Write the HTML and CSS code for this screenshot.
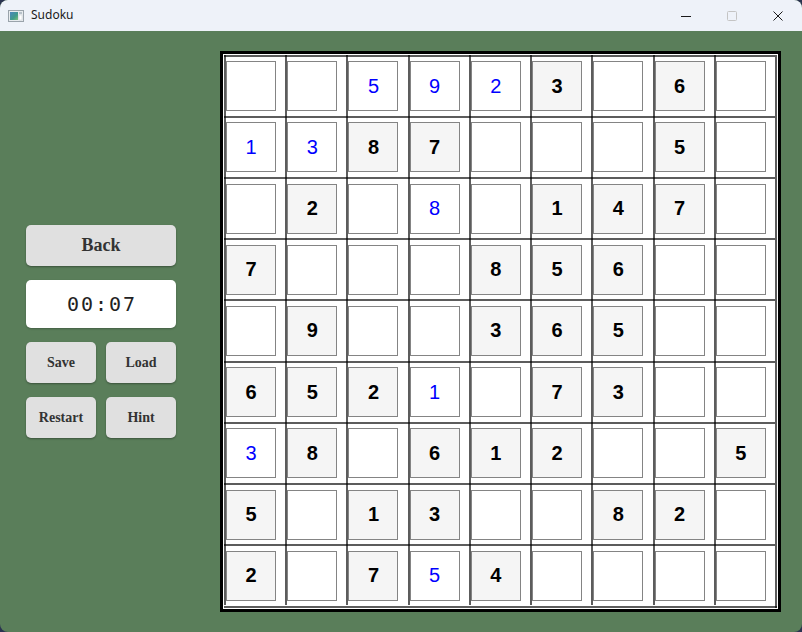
FILE: index.html
```html
<!DOCTYPE html>
<html lang="en">
<head>
<meta charset="utf-8">
<title>Sudoku</title>
<link rel="stylesheet" href="styles.css">
</head>
<body>
<div class="window">
  <div class="titlebar">
    <svg class="app-icon" width="16" height="14" viewBox="0 0 16 14">
      <defs>
        <linearGradient id="ig" x1="0" y1="0" x2="1" y2="1">
          <stop offset="0" stop-color="#4a86c0"/>
          <stop offset="0.6" stop-color="#3f9a8a"/>
          <stop offset="1" stop-color="#7cc07a"/>
        </linearGradient>
      </defs>
      <rect x="0.5" y="1.5" width="15" height="11" fill="#e8ecef" stroke="#9aa3ab"/>
      <rect x="2" y="3" width="8" height="8" fill="url(#ig)"/>
      <rect x="11" y="3" width="3" height="2" fill="#b8c2ca"/>
      <rect x="11" y="6" width="3" height="5" fill="#ffffff" stroke="#c5ccd2" stroke-width="0.5"/>
    </svg>
    <span class="title">Sudoku</span>
    <div class="controls">
      <span class="ctl">
        <svg width="10" height="10" viewBox="0 0 10 10"><path d="M0 5.5H10" stroke="#1a1a1a" stroke-width="1"/></svg>
      </span>
      <span class="ctl">
        <svg width="10" height="10" viewBox="0 0 10 10"><rect x="0.5" y="0.5" width="9" height="9" rx="1" fill="none" stroke="#c4c4c4"/></svg>
      </span>
      <span class="ctl">
        <svg width="10" height="10" viewBox="0 0 10 10"><path d="M0.5 0.5L9.5 9.5M9.5 0.5L0.5 9.5" stroke="#1a1a1a" stroke-width="1"/></svg>
      </span>
    </div>
  </div>
  <div class="content">
    <div class="panel">
      <button class="btn btn-back">Back</button>
      <div class="timer">00:07</div>
      <div class="btn-row">
        <button class="btn btn-small">Save</button>
        <button class="btn btn-small">Load</button>
      </div>
      <div class="btn-row">
        <button class="btn btn-small">Restart</button>
        <button class="btn btn-small">Hint</button>
      </div>
    </div>
    <div class="board">
      <div class="grid" id="grid"></div>
    </div>
  </div>
</div>
<script src="app.js"></script>
</body>
</html>
```

FILE: app.js
```js
// g = given (bold, grey box), u = user entry (blue), . = empty
var rows = [
  ". . u5 u9 u2 g3 . g6 .",
  "u1 u3 g8 g7 . . . g5 .",
  ". g2 . u8 . g1 g4 g7 .",
  "g7 . . . g8 g5 g6 . .",
  ". g9 . . g3 g6 g5 . .",
  "g6 g5 g2 u1 . g7 g3 . .",
  "u3 g8 . g6 g1 g2 . . g5",
  "g5 . g1 g3 . . g8 g2 .",
  "g2 . g7 u5 g4 . . . ."
];
var grid = document.getElementById('grid');
rows.forEach(function (r) {
  r.split(' ').forEach(function (t) {
    var cell = document.createElement('div');
    cell.className = 'cell';
    var box = document.createElement('div');
    box.className = 'box';
    if (t[0] === 'g') { box.className += ' given'; box.textContent = t[1]; }
    else if (t[0] === 'u') { box.className += ' user'; box.textContent = t[1]; }
    cell.appendChild(box);
    grid.appendChild(cell);
  });
});
```

FILE: styles.css
```css
* { box-sizing: border-box; }

html, body {
  margin: 0;
  padding: 0;
  background: #2a3350;
}

.window {
  width: 802px;
  height: 632px;
  border-radius: 8px;
  overflow: hidden;
  background: #5a7e5a;
  display: flex;
  flex-direction: column;
}

.titlebar {
  height: 31px;
  flex: none;
  background: #eef2f9;
  display: flex;
  align-items: center;
  font-family: "Segoe UI", "Noto Sans", sans-serif;
  font-size: 12px;
  color: #1a1a1a;
}

.app-icon {
  margin-left: 8px;
  margin-right: 7px;
  flex: none;
}

.title {
  line-height: 1;
  padding-bottom: 1px;
}

.controls {
  margin-left: auto;
  display: flex;
  height: 100%;
  margin-right: 1px;
}

.ctl {
  width: 46px;
  height: 100%;
  display: flex;
  align-items: center;
  justify-content: center;
}

.content {
  flex: 1;
  display: flex;
  align-items: center;
  padding-left: 26px;
  gap: 44px;
}

.panel {
  width: 150px;
  display: flex;
  flex-direction: column;
  gap: 14px;
}

.btn {
  border: none;
  margin: 0;
  padding: 0;
  background: #e0e0e0;
  border-radius: 5px;
  box-shadow: 0 1px 2px rgba(0, 0, 0, 0.35);
  font-family: "Liberation Serif", "Times New Roman", serif;
  font-weight: bold;
  color: #333;
}

.btn-back {
  height: 41px;
  font-size: 18px;
}

.timer {
  height: 48px;
  background: #fff;
  border-radius: 5px;
  box-shadow: 0 1px 2px rgba(0, 0, 0, 0.25);
  display: flex;
  align-items: center;
  justify-content: center;
  font-family: "DejaVu Sans Mono", monospace;
  font-size: 20px;
  letter-spacing: 2px;
  padding-left: 2px;
  color: #222;
}

.btn-row {
  display: flex;
  gap: 10px;
}

.panel .btn-row:first-of-type {
  margin-top: 1px;
}

.btn-small {
  width: 70px;
  height: 41px;
  font-size: 14px;
}

.board {
  border: 3px solid #000;
  padding: 1px;
  background: #fff;
  margin-top: -1px;
}

.grid {
  box-sizing: content-box;
  width: 551px;
  height: 551px;
  padding: 0 2px 2px 0;
  display: grid;
  grid-template-columns: repeat(9, 1fr);
  grid-template-rows: repeat(9, 1fr);
  background-image:
    linear-gradient(to left, rgba(0, 0, 0, 0.64) 2px, transparent 2px),
    linear-gradient(to top, rgba(0, 0, 0, 0.64) 2px, transparent 2px);
}

.cell {
  padding: 2px 0 0 2px;
  display: flex;
  align-items: center;
  background-image:
    linear-gradient(to right, rgba(0, 0, 0, 0.64) 2px, transparent 2px),
    linear-gradient(to bottom, rgba(0, 0, 0, 0.64) 2px, transparent 2px);
}

.box {
  width: 50px;
  height: 50px;
  border: 1px solid #848484;
  background: #fff;
  display: flex;
  align-items: center;
  justify-content: center;
  font-family: "Liberation Sans", Arial, sans-serif;
  font-size: 20px;
}

.box.given {
  background: #f5f5f5;
  font-weight: bold;
  color: #000;
}

.box.user {
  color: #0000ff;
}
```
